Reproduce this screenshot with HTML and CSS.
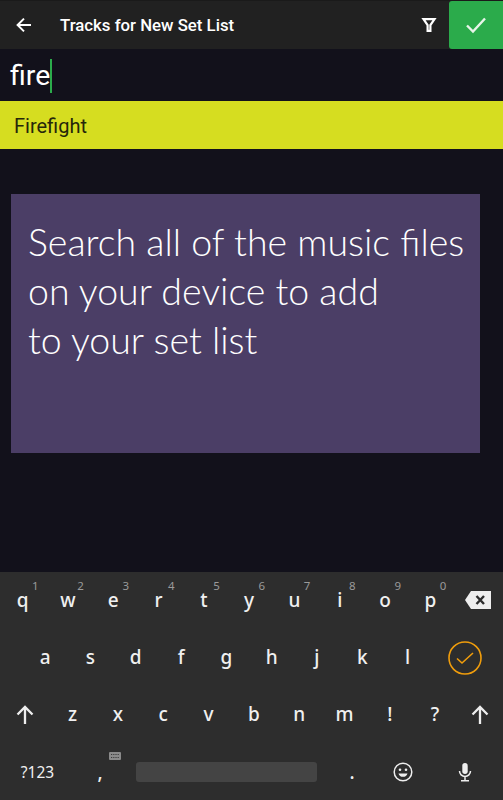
FILE: index.html
```html
<!DOCTYPE html>
<html lang="en">
<head>
<meta charset="utf-8">
<title>Tracks for New Set List</title>
<link rel="stylesheet" href="styles.css">
</head>
<body>
<div class="screen">
  <header class="appbar">
    <button class="icon-btn back" aria-label="Back">
      <svg width="18" height="18" viewBox="0 0 18 18"><path d="M16 9H3M9 2.600 2.600 9 9 15.400" fill="none" stroke="#fff" stroke-width="2"/></svg>
    </button>
    <h1 class="title">Tracks for New Set List</h1>
    <button class="icon-btn filter" aria-label="Filter">
      <svg width="16" height="16" viewBox="0 0 16 16"><path d="M2.500 2.200h11L9.400 8v5.800H6.600V8Z" fill="none" stroke="#fff" stroke-width="2.200"/></svg>
    </button>
    <button class="confirm" aria-label="Done">
      <svg width="22" height="20" viewBox="0 0 22 20"><path d="M2 10.500 8 16.500 20 3.500" fill="none" stroke="#e8f5e9" stroke-width="2.400"/></svg>
    </button>
  </header>
  <div class="search"><span class="query">fire</span><span class="caret"></span></div>
  <div class="result">Firefight</div>
  <main class="content">
    <section class="hint-card">
      <p>Search all of the music files<br>on your device to add<br>to your set list</p>
    </section>
  </main>
  <div class="keyboard">
    <div class="row row1">
      <div class="key"><sup>1</sup>q</div><div class="key"><sup>2</sup>w</div><div class="key"><sup>3</sup>e</div><div class="key"><sup>4</sup>r</div><div class="key"><sup>5</sup>t</div><div class="key"><sup>6</sup>y</div><div class="key"><sup>7</sup>u</div><div class="key"><sup>8</sup>i</div><div class="key"><sup>9</sup>o</div><div class="key"><sup>0</sup>p</div>
      <div class="key wide">
        <svg width="28" height="20" viewBox="0 0 28 20"><path d="M7 1h20v18H7L1 10Z" fill="#eee"/><path d="M12.500 6 20 14M20 6l-7.500 8" stroke="#2d2d2d" stroke-width="2.400"/></svg>
      </div>
    </div>
    <div class="row row2">
      <div class="key">a</div><div class="key">s</div><div class="key">d</div><div class="key">f</div><div class="key">g</div><div class="key">h</div><div class="key">j</div><div class="key">k</div><div class="key">l</div>
      <div class="key enter">
        <svg width="34" height="34" viewBox="0 0 34 34"><circle cx="17" cy="17" r="16" fill="none" stroke="#f09d0c" stroke-width="1.600"/><path d="M9 17.500 14 22 25 12" fill="none" stroke="#f09d0c" stroke-width="1.600"/></svg>
      </div>
    </div>
    <div class="row row3">
      <div class="key shift">
        <svg width="18" height="20" viewBox="0 0 18 20"><path d="M9 19V2M1.500 9.500 9 2l7.500 7.500" fill="none" stroke="#eee" stroke-width="2.300"/></svg>
      </div>
      <div class="key">z</div><div class="key">x</div><div class="key">c</div><div class="key">v</div><div class="key">b</div><div class="key">n</div><div class="key">m</div><div class="key">!</div><div class="key">?</div>
      <div class="key last-shift">
        <svg width="18" height="20" viewBox="0 0 18 20"><path d="M9 19V2M1.500 9.500 9 2l7.500 7.500" fill="none" stroke="#eee" stroke-width="2.300"/></svg>
      </div>
    </div>
    <div class="row row4">
      <div class="key sym">?123</div>
      <div class="key comma">,
        <svg class="kbd-mini" width="12" height="8" viewBox="0 0 12 8"><rect width="12" height="8" rx="1" fill="#8a8a8a"/><path d="M2 2.500h8M2 5.500h8" stroke="#3a3a3a" stroke-dasharray="1 .8"/></svg>
      </div>
      <div class="space-wrap"><div class="spacebar"></div></div>
      <div class="key period">.</div>
      <div class="key emoji">
        <svg width="20" height="20" viewBox="0 0 20 20"><circle cx="10" cy="10" r="8.800" fill="none" stroke="#eee" stroke-width="1.500"/><circle cx="7" cy="7.800" r="1.300" fill="#eee"/><circle cx="13" cy="7.800" r="1.300" fill="#eee"/><path d="M5.500 11.500a4.700 4.700 0 0 0 9 0Z" fill="#eee"/></svg>
      </div>
      <div class="key mic">
        <svg width="14" height="20" viewBox="0 0 14 20"><rect x="4.300" y="1" width="5.400" height="11" rx="2.700" fill="#eee"/><path d="M1.500 9a5.500 5.500 0 0 0 11 0M7 14.500V18M3 18.800h8" fill="none" stroke="#eee" stroke-width="1.500"/></svg>
      </div>
    </div>
  </div>
</div>
</body>
</html>
```

FILE: styles.css
```css
* { box-sizing: border-box; }
html, body { margin: 0; padding: 0; }
body { background: #12111b; font-family: Roboto, sans-serif; }
.screen { width: 503px; height: 800px; display: flex; flex-direction: column; overflow: hidden; background: #12111b; }

.appbar { height: 49px; flex: none; display: flex; align-items: center; background: #212121; border-top: 1px solid #1a1a1a; }
.icon-btn { border: 0; padding: 0; background: none; display: flex; align-items: center; justify-content: center; }
.back { width: 48px; height: 48px; }
.title { margin: 0 0 0 12px; flex: 1; font-size: 16.800px; font-weight: 500; color: #fff; }
.filter { width: 40px; height: 48px; }
.confirm { width: 54px; height: 48px; border: 0; border-radius: 3px 0 0 3px; background: #2bab4b; display: flex; align-items: center; justify-content: center; }

.search { height: 52px; flex: none; display: flex; align-items: center; padding: 1px 0 0 10px; }
.query { font-size: 28.500px; color: #fff; line-height: 34px; }
.caret { width: 2px; height: 34px; background: #2bab4b; }

.result { height: 48px; flex: none; display: flex; align-items: center; padding: 1px 0 0 14px; background: #d6dd20; font-size: 20px; color: #26270a; }

.content { flex: 1; padding: 44.500px 23px 0 11px; }
.hint-card { height: 259px; padding: 23px 17px 0; background: #4b3e66; }
.hint-card p { margin: 0; font-family: Lato, sans-serif; font-weight: 300; font-size: 37.500px; line-height: 49px; color: #fff; white-space: nowrap; }

.keyboard { height: 228px; flex: none; background: #2d2d2d; color: #f0f0f0; font-family: "Noto Sans", sans-serif; font-size: 19px; font-weight: 500; }
.row { height: 57px; display: flex; align-items: center; }
.key { position: relative; flex: 1 1 0; height: 100%; display: flex; align-items: center; justify-content: center; padding-bottom: 2px; }
.key sup { position: absolute; top: 7px; left: 32px; font-size: 11.500px; font-weight: 400; line-height: 14px; color: #9a9a9a; }
.row1 .key { flex: none; width: 45.300px; }
.row1 .key.wide { flex: 1; }
.row2 { padding-left: 22.500px; }
.row2 .key { flex: none; width: 45.300px; }
.row2 .key.enter { flex: 1; padding-right: 4px; padding-bottom: 0; }
.row3 .key { flex: none; width: 45.300px; }
.row3 .key.shift { width: 50px; padding-bottom: 0; }
.row3 .key.last-shift { width: 45.300px; padding-bottom: 0; }
.row4 .key { flex: none; padding-bottom: 0; }
.key.sym { width: 75px; font-size: 15.500px; font-weight: 400; }
.key.comma { width: 50px; }
.kbd-mini { position: absolute; top: 9px; right: 4px; }
.space-wrap { width: 203px; display: flex; justify-content: center; flex: none; height: 100%; align-items: center; }
.spacebar { width: 181px; height: 20px; border-radius: 3px; background: #444; }
.key.period { width: 48px; }
.key.emoji { width: 54px; }
.key.mic { width: 70px; }
```
